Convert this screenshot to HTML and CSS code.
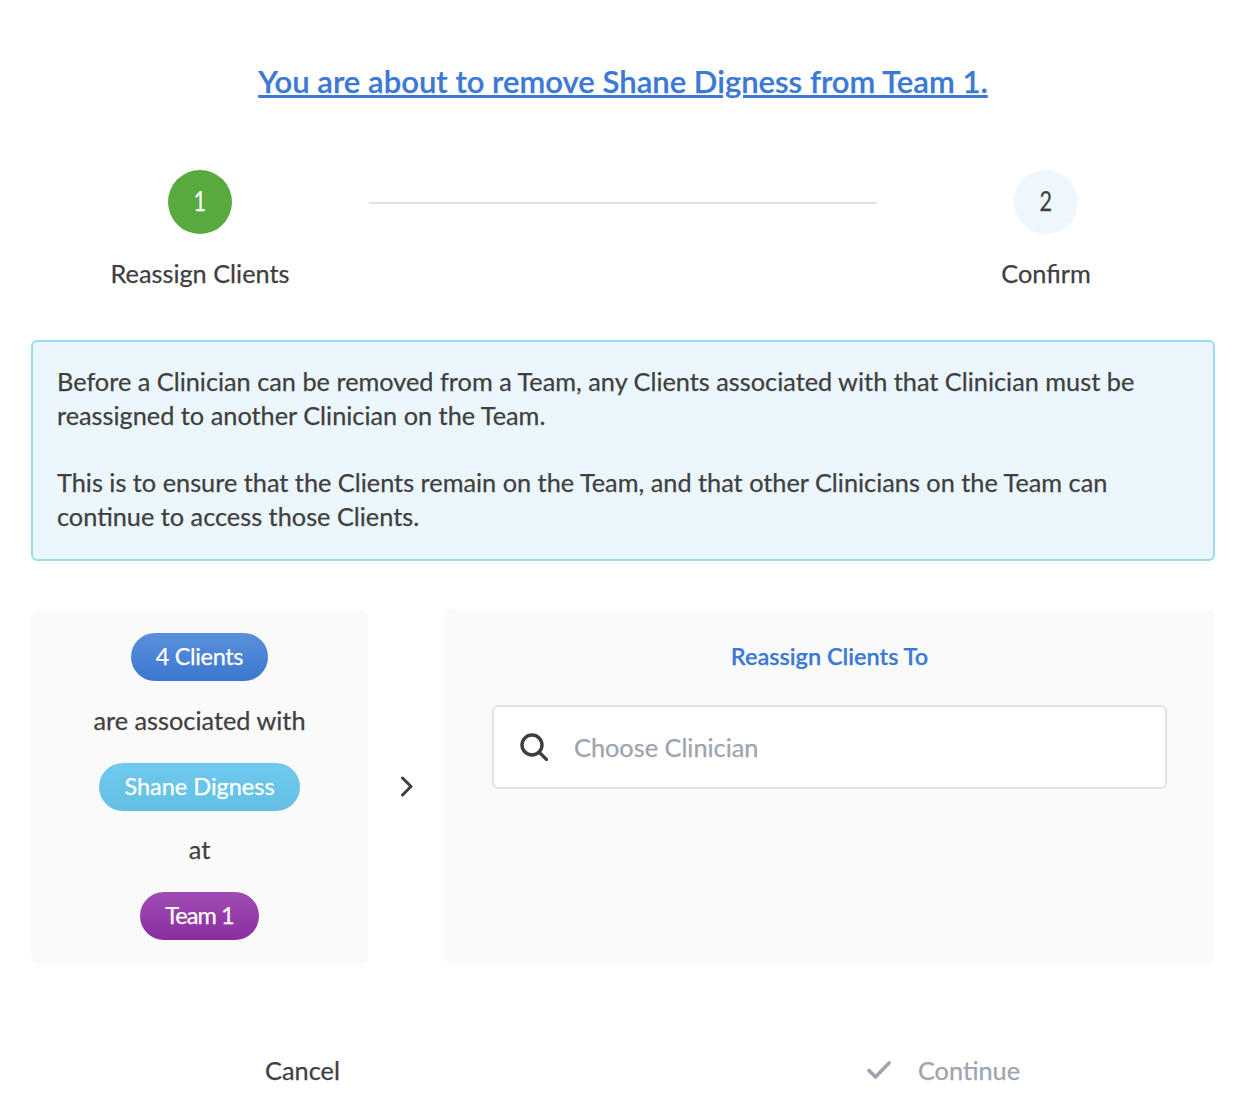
FILE: index.html
```html
<!DOCTYPE html>
<html lang="en">
<head>
  <meta charset="UTF-8">
  <title>Remove Clinician</title>
  <link rel="stylesheet" href="styles.css">
</head>
<body>
  <div class="modal">
    <h1 class="title"><a href="#">You are about to remove Shane Digness from Team 1.</a></h1>

    <div class="steps">
      <div class="step">
        <div class="step-num active"><span class="digit">1</span></div>
        <div class="step-label">Reassign Clients</div>
      </div>
      <div class="step-line"></div>
      <div class="step">
        <div class="step-num"><span class="digit">2</span></div>
        <div class="step-label">Confirm</div>
      </div>
    </div>

    <div class="notice">
      <p>Before a Clinician can be removed from a Team, any Clients associated with that Clinician must be reassigned to another Clinician on the Team.</p>
      <p>This is to ensure that the Clients remain on the Team, and that other Clinicians on the Team can continue to access those Clients.</p>
    </div>

    <div class="reassign">
      <div class="panel summary">
        <span class="pill pill-blue">4 Clients</span>
        <div class="summary-text">are associated with</div>
        <span class="pill pill-cyan">Shane Digness</span>
        <div class="summary-text">at</div>
        <span class="pill pill-purple">Team 1</span>
      </div>

      <div class="arrow">
        <svg width="14" height="21" viewBox="0 0 14 21" fill="none" stroke="#3f3f3f" stroke-width="3" stroke-linecap="round" stroke-linejoin="round">
          <path d="M3.5 2 L12 10.5 L3.5 19"/>
        </svg>
      </div>

      <div class="panel target">
        <div class="target-title">Reassign Clients To</div>
        <div class="search">
          <svg class="search-icon" width="28" height="28" viewBox="0 0 28 28" fill="none" stroke="#3f3f3f" stroke-linecap="round">
            <circle cx="12" cy="12" r="10" stroke-width="3.4"/>
            <path d="M19.5 19.5 L26.5 26.5" stroke-width="3.2"/>
          </svg>
          <span class="placeholder">Choose Clinician</span>
        </div>
      </div>
    </div>

    <div class="actions">
      <button class="btn">Cancel</button>
      <button class="btn disabled">
        <svg width="24" height="18" viewBox="0 0 24 18" fill="none" stroke="#9da4ae" stroke-width="3.6" stroke-linecap="round" stroke-linejoin="round">
          <path d="M2 9.5 L8.5 16 L22 2"/>
        </svg>
        Continue
      </button>
    </div>
  </div>
</body>
</html>
```

FILE: styles.css
```css
body {
  margin: 0;
  background-color: #fff;
  color: #3f3f3f;
  font-family: Lato, "Open Sans", sans-serif;
  font-size: 25.3px;
  -webkit-text-stroke: 0.25px;
}

.modal {
  width: 1184px;
  margin-left: 31px;
  padding-top: 60px;
}

.title {
  margin: 0 0 68px;
  font-size: 31.05px;
  line-height: 42px;
  font-weight: 600;
  text-align: center;
}

.title a {
  color: #3b79d4;
  text-decoration-thickness: 3px;
}

.steps {
  display: grid;
  grid-template-columns: 338px 1fr 338px;
}

.step {
  display: flex;
  flex-direction: column;
  align-items: center;
}

.step-num {
  width: 64px;
  height: 64px;
  padding-bottom: 3px;
  box-sizing: border-box;
  border-radius: 50%;
  background-color: #edf7fd;
  display: flex;
  align-items: center;
  justify-content: center;
  font-size: 27px;
}

.step-num.active {
  background-color: #58aa3e;
  color: #fff;
}

.digit {
  transform: scaleX(0.8);
}

.step-label {
  margin-top: 23px;
  line-height: 32px;
}

.step-line {
  height: 2px;
  margin-top: 32px;
  background-color: #e2e2e2;
}

.notice {
  margin-top: 51px;
  padding: 23px 24px;
  height: 171px;
  background-color: #ebf7fd;
  border: 2px solid #9adcf0;
  border-radius: 6px;
  line-height: 33.6px;
}

.notice p {
  margin: 0 0 34px;
}

.reassign {
  display: grid;
  grid-template-columns: 337px 76px 1fr;
  margin-top: 48px;
  height: 355px;
}

.panel {
  background-color: #fafafa;
  border-radius: 8px;
}

.summary {
  display: flex;
  flex-direction: column;
  justify-content: space-between;
  align-items: center;
  padding: 24px 0;
  box-sizing: border-box;
}

.pill {
  height: 46px;
  line-height: 46px;
  padding: 0 25px 2px;
  border-radius: 24px;
  color: #fff;
  font-size: 23.5px;
}

.pill-blue {
  background: linear-gradient(#5b8fdb, #3b77cf);
  letter-spacing: -0.35px;
}

.pill-cyan {
  background: linear-gradient(#6dcbef, #64bfe2);
}

.pill-purple {
  background: linear-gradient(#a04db5, #8a2d9f);
  letter-spacing: -0.9px;
}

.summary-text {
  line-height: 29px;
  padding-bottom: 3px;
}

.arrow {
  display: flex;
  align-items: center;
  justify-content: center;
}

.target {
  padding: 32px 48px 0;
}

.target-title {
  text-align: center;
  color: #3b79d4;
  font-size: 23.5px;
  font-weight: 600;
  line-height: 30px;
  padding-bottom: 2px;
}

.search {
  display: flex;
  align-items: center;
  height: 84px;
  margin-top: 32px;
  padding-left: 26px;
  box-sizing: border-box;
  background-color: #fff;
  border: 2px solid #e2e2e2;
  border-radius: 6px;
}

.search-icon {
  margin-right: 26px;
}

.placeholder {
  color: #9da4ae;
}

.actions {
  display: grid;
  grid-template-columns: 1fr 1fr;
  column-gap: 98px;
  margin-top: 74px;
}

.btn {
  background: none;
  border: none;
  padding: 0;
  height: 64px;
  display: flex;
  align-items: center;
  justify-content: center;
  gap: 27px;
  color: #3f3f3f;
  font: inherit;
  -webkit-text-stroke: 0.25px;
  cursor: pointer;
}

.btn.disabled {
  color: #9da4ae;
}
```
